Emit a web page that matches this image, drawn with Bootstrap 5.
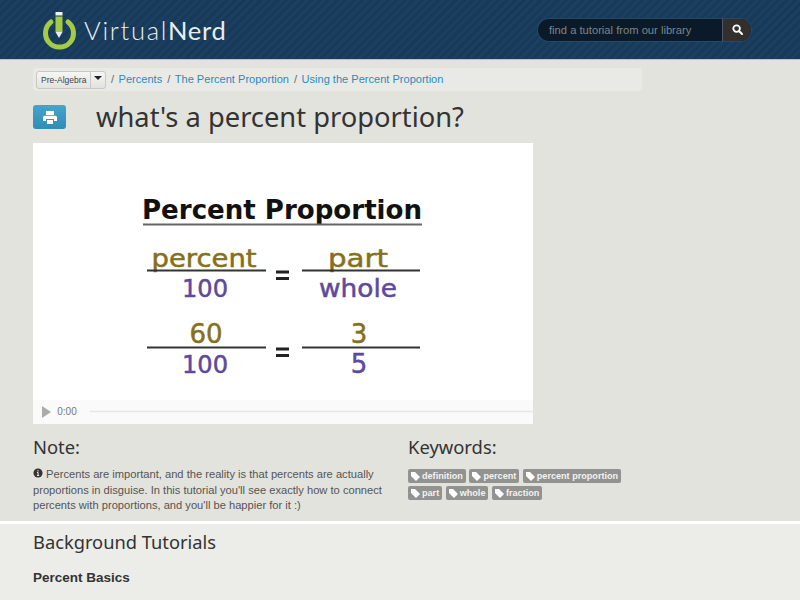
<!DOCTYPE html>
<html lang="en">
<head>
<meta charset="utf-8">
<title>What's a percent proportion?</title>
<link href="https://cdn.jsdelivr.net/npm/bootstrap@5.3.0/dist/css/bootstrap.min.css" rel="stylesheet">
<style>
html,body{height:600px;overflow:hidden}
body{background:#e2e3dd;font-family:"Liberation Sans",Arial,sans-serif;color:#555;font-size:11px}
.vn-top{height:60px;padding:0 49px 0 42px;border-bottom:1px solid #b6cf83;
 background:repeating-linear-gradient(135deg,#1a3f60 0 3px,#173a59 3px 6px)}
.vn-brand{font-family:"Lato",sans-serif;font-size:25.500px;letter-spacing:1.700px;color:#e9eeef;font-weight:300;line-height:1;margin-left:7px;margin-top:3px}
.vn-brand b{font-weight:400;letter-spacing:.7px}
.vn-search{width:213px;height:22px;border-radius:11px;overflow:hidden;background:#0a1a28;box-shadow:0 0 0 1px #26496a}
.vn-search-text{flex:1;padding-left:11px;color:#7f858a;font-size:11.200px;line-height:22px;white-space:nowrap}
.vn-search-btn{width:29px;background:#322f2d;border-left:1px solid #4a5a68}
.vn-main{padding:8px 0 0 33px}
.vn-crumbs{width:609px;height:23px;margin-bottom:0;padding:0 3px;background:#e9eae5;border-radius:3px;font-size:11.050px;color:#666}
.vn-crumbs a{color:#2a8bc0;text-decoration:none}
.vn-sel{width:70px;height:18px;border:1px solid #c8c8c4;border-radius:3px;background:linear-gradient(#f6f6f4,#e2e2de);font-size:8.500px;color:#444;line-height:16px}
.vn-sel-name{padding-left:4px;flex:1;white-space:nowrap}
.vn-sel-caret{width:15px;border-left:1px solid #c8c8c4}
.vn-caret{width:0;height:0;border:4px solid transparent;border-top-color:#222;border-bottom:0;margin-bottom:3px}
.vn-sep{margin:0 4.500px 0 5px}
.vn-title{height:52px}
.vn-print{width:33px;height:24px;background:linear-gradient(#46a4cb,#2f8db6);border-radius:3px;margin-right:30px;border:0;padding:0}
.vn-h1{font-family:"Noto Sans","Open Sans",sans-serif;font-size:27.300px;line-height:1;color:#333;margin:-1px 0 0;font-weight:400}
.vn-video{width:500px;height:281px;background:#fff;display:block}
.vn-lower{height:84px;margin-top:13px}
.vn-note{width:375px}
.vn-h3{font-family:"Noto Sans","Open Sans",sans-serif;font-size:18.400px;line-height:20px;color:#333;font-weight:400;margin:0 0 10px}
.vn-note p{width:356px;font-size:11.150px;line-height:15.600px;margin:0;color:#555}
.vn-tags{width:225px;gap:3px 3.500px;margin-top:12px}
.vn-tag{background:#929290;color:#f4f4f2;font-size:9.100px;font-weight:700;line-height:14px;height:14px;border-radius:2px;padding:0 3px;display:inline-flex;align-items:center;gap:2px}
.vn-bg{border-top:3px solid #fff;background:#ecede8;height:79px;padding:7px 0 0 33px}
.vn-h2{font-family:"Noto Sans","Open Sans",sans-serif;font-size:18.300px;line-height:22px;color:#333;font-weight:400;margin:0 0 17px}
.vn-h5{font-size:13.500px;font-weight:700;line-height:15px;color:#333;margin:0}
</style>
</head>
<body>
<header class="vn-top d-flex align-items-center justify-content-between">
  <div class="d-flex align-items-center">
    <svg width="35" height="40" viewBox="0 0 35 40">
      <path d="M9 12A14 14 0 1 0 26 12" fill="none" stroke="#a3cb45" stroke-width="5" stroke-linecap="round"/>
      <rect x="13.500" y="2" width="7" height="3.500" fill="#eef1ee"/>
      <rect x="13.500" y="6.500" width="7" height="15.500" fill="#a3cb45"/>
      <path d="M13.500 22h7l-3.500 6z" fill="#e9eeea"/>
    </svg>
    <div class="vn-brand">Virtual<b>Nerd</b></div>
  </div>
  <div class="vn-search d-flex">
    <div class="vn-search-text">find a tutorial from our library</div>
    <div class="vn-search-btn d-flex align-items-center justify-content-center">
      <svg width="11" height="11" viewBox="0 0 11 11"><circle cx="4.600" cy="4.600" r="3.300" fill="none" stroke="#fff" stroke-width="1.800"/><path d="M7 7l3 3" stroke="#fff" stroke-width="2" stroke-linecap="round"/></svg>
    </div>
  </div>
</header>
<main class="vn-main">
  <nav class="vn-crumbs d-flex align-items-center">
    <div class="vn-sel d-flex">
      <span class="vn-sel-name">Pre-Algebra</span>
      <span class="vn-sel-caret d-flex align-items-center justify-content-center"><span class="vn-caret"></span></span>
    </div>
    <span class="vn-sep">/</span><a href="#">Percents</a>
    <span class="vn-sep">/</span><a href="#">The Percent Proportion</a>
    <span class="vn-sep">/</span><a href="#">Using the Percent Proportion</a>
  </nav>
  <div class="vn-title d-flex align-items-center">
    <button class="vn-print d-flex align-items-center justify-content-center" aria-label="Print">
      <svg width="14" height="13" viewBox="0 0 14 13" fill="#fff"><path d="M3 0h8v4H3z"/><path d="M1.500 4.800h11a1.500 1.500 0 0 1 1.500 1.500V10h-3V8H3v2H0V6.300a1.500 1.500 0 0 1 1.500-1.500z"/><path d="M4 9h6v4H4z"/></svg>
    </button>
    <h1 class="vn-h1">what's a percent proportion?</h1>
  </div>
  <svg class="vn-video" viewBox="0 0 500 281" font-family="'DejaVu Sans',sans-serif" text-anchor="middle">
    <text x="249" y="76" font-size="27" font-weight="700" fill="#111" textLength="280" lengthAdjust="spacingAndGlyphs">Percent Proportion</text>
    <path d="M110 81.500h279" stroke="#666" stroke-width="2" fill="none"/>
    <g fill="#85701c" stroke="#85701c" stroke-width=".5" font-size="24">
      <text x="171" y="124" textLength="105" lengthAdjust="spacingAndGlyphs">percent</text>
      <text x="325" y="124" textLength="60" lengthAdjust="spacingAndGlyphs">part</text>
      <text x="173" y="200" font-size="26">60</text>
      <text x="326" y="200" font-size="26">3</text>
    </g>
    <g fill="#5d4a9c" stroke="#5d4a9c" stroke-width=".5" font-size="25">
      <text x="172" y="154" textLength="46" lengthAdjust="spacingAndGlyphs">100</text>
      <text x="325" y="154" font-size="24" textLength="78" lengthAdjust="spacingAndGlyphs">whole</text>
      <text x="172" y="230" textLength="46" lengthAdjust="spacingAndGlyphs">100</text>
      <text x="326" y="230" font-size="26">5</text>
    </g>
    <path d="M114 127.500h119M269 127.500h118M114 204.500h119M269 204.500h118" stroke="#333" stroke-width="2" fill="none"/>
    <path d="M243 129h13M243 135.500h13M243 206h13M243 212.500h13" stroke="#222" stroke-width="3" fill="none"/>
    <rect y="257" width="500" height="24" fill="#fafafa"/>
    <path d="M9 263l9 6-9 6z" fill="#aaa"/>
    <text x="34" y="272" font-family="'Liberation Sans',sans-serif" font-size="10" fill="#777">0:00</text>
    <path d="M57 268.500H500" stroke="#e6e6e6" stroke-width="1.500"/>
  </svg>
  <div class="vn-lower d-flex">
    <section class="vn-note">
      <h3 class="vn-h3">Note:</h3>
      <p><svg width="10" height="10" viewBox="0 0 11 11" class="align-baseline"><circle cx="5.500" cy="5.500" r="5" fill="#333"/><path d="M5.500 2.300v1.500M4.400 5h1.200v3M4.300 8.200h2.500" stroke="#fff" fill="none"/></svg> Percents are important, and the reality is that percents are actually proportions in disguise. In this tutorial you'll see exactly how to connect percents with proportions, and you'll be happier for it :)</p>
    </section>
    <section>
      <h3 class="vn-h3">Keywords:</h3>
      <div class="vn-tags d-flex flex-wrap">
        <span class="vn-tag"><svg width="9" height="9" viewBox="0 0 9 9"><path d="M0 0h4l5 5-4 4-5-5z" fill="#fff"/></svg>definition</span>
        <span class="vn-tag"><svg width="9" height="9" viewBox="0 0 9 9"><path d="M0 0h4l5 5-4 4-5-5z" fill="#fff"/></svg>percent</span>
        <span class="vn-tag"><svg width="9" height="9" viewBox="0 0 9 9"><path d="M0 0h4l5 5-4 4-5-5z" fill="#fff"/></svg>percent proportion</span>
        <span class="vn-tag"><svg width="9" height="9" viewBox="0 0 9 9"><path d="M0 0h4l5 5-4 4-5-5z" fill="#fff"/></svg>part</span>
        <span class="vn-tag"><svg width="9" height="9" viewBox="0 0 9 9"><path d="M0 0h4l5 5-4 4-5-5z" fill="#fff"/></svg>whole</span>
        <span class="vn-tag"><svg width="9" height="9" viewBox="0 0 9 9"><path d="M0 0h4l5 5-4 4-5-5z" fill="#fff"/></svg>fraction</span>
      </div>
    </section>
  </div>
</main>
<section class="vn-bg">
  <h2 class="vn-h2">Background Tutorials</h2>
  <h5 class="vn-h5">Percent Basics</h5>
</section>
</body>
</html>
